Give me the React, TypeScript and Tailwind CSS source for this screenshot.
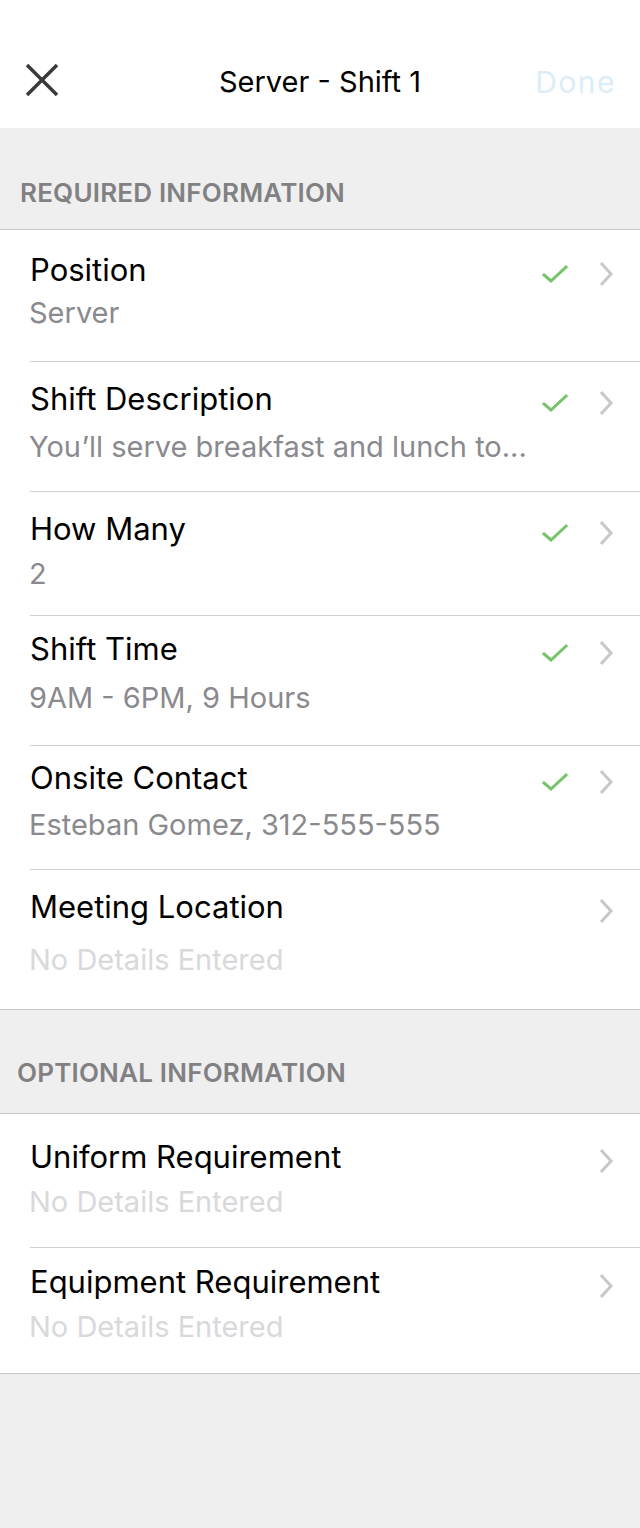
import React from "react";

type Row = {
  title: string;
  value?: string;
  done?: boolean;
  h: number;
  pt: number;
  gap: number;
};

const required: Row[] = [
  { title: "Position", value: "Server", done: true, h: 132, pt: 21, gap: 7 },
  { title: "Shift Description", value: "You\u2019ll serve breakfast and lunch to...", done: true, h: 130, pt: 18, gap: 12 },
  { title: "How Many", value: "2", done: true, h: 124, pt: 18, gap: 9 },
  { title: "Shift Time", value: "9AM - 6PM, 9 Hours", done: true, h: 130, pt: 14, gap: 13 },
  { title: "Onsite Contact", value: "Esteban Gomez, 312-555-555", done: true, h: 124, pt: 13, gap: 11 },
  { title: "Meeting Location", h: 139, pt: 18, gap: 17 },
];

const optional: Row[] = [
  { title: "Uniform Requirement", h: 134, pt: 24, gap: 9 },
  { title: "Equipment Requirement", h: 125, pt: 15, gap: 9 },
];

function Check() {
  return (
    <svg width="26" height="20" viewBox="0 0 26 20" fill="none">
      <path d="M2 11 L9 17 L24 3" stroke="#76c46a" strokeWidth="3" strokeLinecap="square" />
    </svg>
  );
}

function Chevron() {
  return (
    <svg width="16" height="26" viewBox="0 0 16 26" fill="none">
      <path d="M3 2 L13 13 L3 24" stroke="#c7c7cc" strokeWidth="3" />
    </svg>
  );
}

function ListRow({ row, last }: { row: Row; last: boolean }) {
  return (
    <div className="pl-[30px]" style={{ height: row.h }}>
      <div className={`flex h-full ${last ? "" : "border-b border-[#d2d2d6]"}`}>
        <div className="flex-1 flex flex-col" style={{ paddingTop: row.pt, rowGap: row.gap }}>
          <div className="text-[31px] leading-[38px] text-black">{row.title}</div>
          <div
            className={`text-[29px] leading-[34px] -ml-[1px] ${
              row.value ? "text-[#8a8a8e]" : "text-[#d9d9db]"
            }`}
          >
            {row.value ?? "No Details Entered"}
          </div>
        </div>
        <div className="pr-[26px]" style={{ paddingTop: row.pt + 10 }}>
          <div className="flex items-center gap-[30px] h-[26px]">
            {row.done ? <Check /> : <div className="w-[26px]" />}
            <Chevron />
          </div>
        </div>
      </div>
    </div>
  );
}

function Section({ label, rows, pl, h, pb }: { label: string; rows: Row[]; pl: string; h: string; pb: string }) {
  return (
    <div>
      <div className={`${h} ${pb} ${pl} bg-[#efeff0] flex items-end border-b border-[#c8c8cc]`}>
        <span className="text-[26px] leading-[30px] font-semibold text-[#818183] tracking-[0.2px]">{label}</span>
      </div>
      <div className="bg-white border-b border-[#c8c8cc]">
        {rows.map((r, i) => (
          <ListRow key={r.title} row={r} last={i === rows.length - 1} />
        ))}
      </div>
    </div>
  );
}

export default function App() {
  return (
    <div className="w-[640px] h-[1528px] bg-[#efeff0] font-['Inter',sans-serif]">
      <div className="h-[128px] bg-white grid grid-cols-[1fr_auto_1fr] items-end pb-[28px] px-[24px]">
        <svg width="36" height="36" viewBox="0 0 36 36" className="mb-[2px]">
          <path d="M3 3 L33 33 M33 3 L3 33" stroke="#3a3a3a" strokeWidth="3.5" />
        </svg>
        <div className="text-center text-[29px] leading-[36px] text-black">Server - Shift 1</div>
        <div className="text-right text-[30px] leading-[36px] tracking-[1.5px] text-[#dcedf9]">Done</div>
      </div>
      <Section label="REQUIRED INFORMATION" rows={required} pl="pl-[20px]" h="h-[102px]" pb="pb-[21px]" />
      <Section label="OPTIONAL INFORMATION" rows={optional} pl="pl-[17px]" h="h-[104px]" pb="pb-[25px]" />
    </div>
  );
}
